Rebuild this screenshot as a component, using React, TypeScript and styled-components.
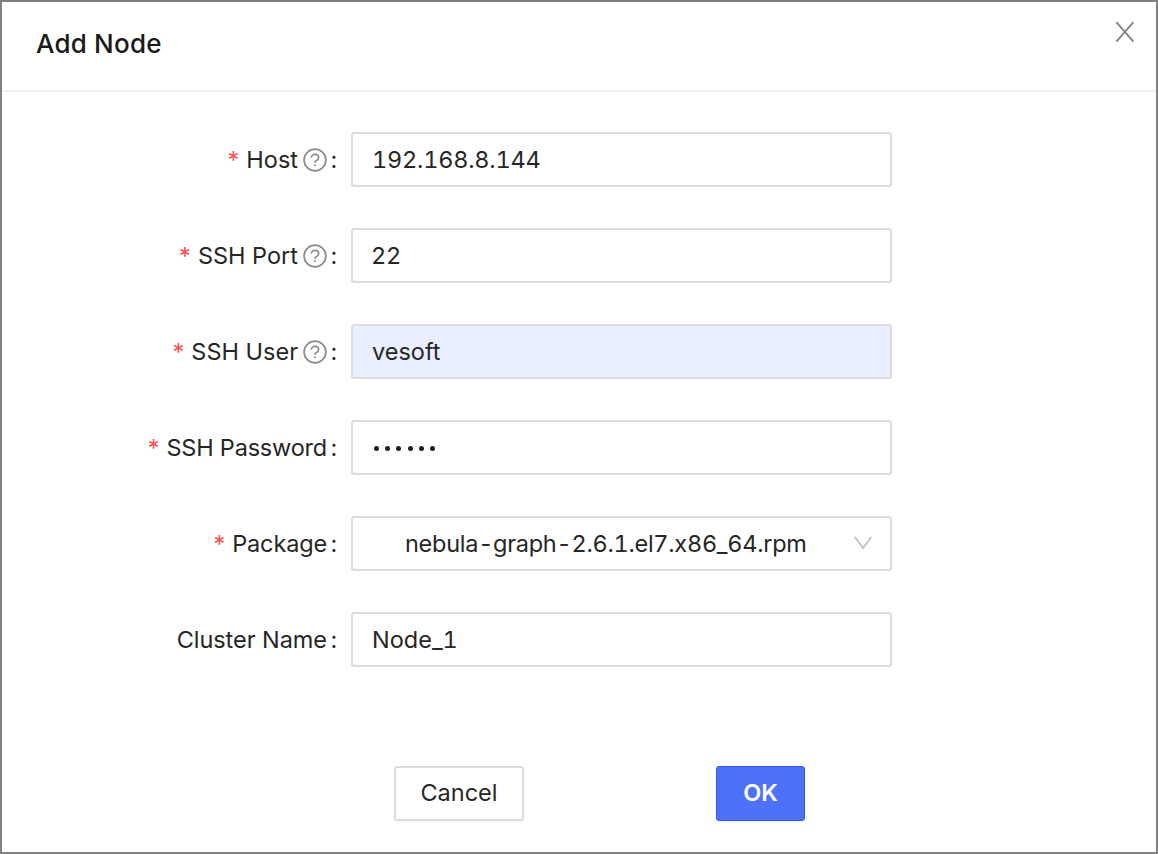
import React from "react";
import styled, { createGlobalStyle } from "styled-components";

const Global = createGlobalStyle`
  * { box-sizing: border-box; }
  body { margin: 0; background: #fff; }
`;

const Modal = styled.div`
  width: 1158px;
  height: 854px;
  border: 2px solid #828080;
  background: #fff;
  font-family: Inter, Roboto, sans-serif;
  font-size: 23.5px;
  font-feature-settings: "calt" 0;
  line-height: 28px;
  color: #262626;
  display: flex;
  flex-direction: column;
`;

const Header = styled.header`
  height: 90px;
  flex: none;
  display: flex;
  justify-content: space-between;
  align-items: flex-start;
  padding: 19px 21px 0 34px;
  border-bottom: 2px solid #f0f0f0;
`;

const Title = styled.h1`
  margin: 8px 0 0;
  font-size: 26px;
  font-weight: 500;
  line-height: 30px;
  letter-spacing: 0.2px;
  color: #1a1a1a;
`;

const CloseIcon = styled.svg`
  width: 20px;
  height: 22px;
  flex: none;
`;

const Form = styled.div`
  padding-top: 40px;
  display: flex;
  flex-direction: column;
  gap: 41px;
`;

const Row = styled.div`
  height: 55px;
  display: flex;
  align-items: center;
`;

const Label = styled.div`
  width: 335px;
  margin-right: 14px;
  flex: none;
  display: flex;
  align-items: center;
  justify-content: flex-end;
  white-space: nowrap;
`;

const Required = styled.span`
  color: #ff4d4f;
  margin-right: 7px;
`;

const Text = styled.span<{ $spacing?: number; $tabular?: boolean }>`
  letter-spacing: ${(p) => p.$spacing ?? 0}px;
  font-feature-settings: "tnum" ${(p) => (p.$tabular ? 1 : 0)}, "calt" 0;
  white-space: nowrap;
`;

const HelpIcon = styled.svg`
  width: 24px;
  height: 24px;
  margin: 0 0 0 5px;
`;

const Colon = styled.span`
  width: 6px;
  margin-left: 4px;
  display: flex;
  justify-content: center;
`;

const Field = styled.div<{ $filled?: boolean; $inset?: number }>`
  width: 541px;
  height: 55px;
  border: 2px solid #dcdcdc;
  border-radius: 3px;
  background: ${(p) => (p.$filled ? "#e9effe" : "#fff")};
  padding: 0 17px 0 ${(p) => p.$inset ?? 19}px;
  display: flex;
  align-items: center;
  justify-content: space-between;
`;

const Dots = styled.span`
  display: flex;
  gap: 6.2px;
  padding: 1px 0 0 2px;
`;

const Dot = styled.i`
  width: 5px;
  height: 5px;
  border-radius: 50%;
  background: #1f1f1f;
`;

const Chevron = styled.svg`
  width: 20px;
  height: 16px;
`;

const Footer = styled.footer`
  display: flex;
  gap: 192px;
  padding: 99px 0 0 392px;
`;

const Button = styled.button<{ $primary?: boolean }>`
  width: ${(p) => (p.$primary ? 89 : 130)}px;
  height: 55px;
  padding: 0 0 1px;
  border: 2px solid ${(p) => (p.$primary ? "#2f5cf5" : "#dcdcdc")};
  border-width: ${(p) => (p.$primary ? 1 : 2)}px;
  border-radius: 3px;
  background: ${(p) => (p.$primary ? "#4d72f8" : "#fff")};
  color: ${(p) => (p.$primary ? "#fff" : "#262626")};
  box-shadow: 0 2px 1px rgba(0, 0, 0, 0.025);
  font: inherit;
  font-weight: ${(p) => (p.$primary ? 600 : 400)};
`;

function Help() {
  return (
    <HelpIcon viewBox="0 0 24 24" fill="none" stroke="#8c8c8c">
      <circle cx="12" cy="12" r="10.9" strokeWidth="1.7" />
      <path d="M8.4 9.7C8.4 7.6 9.9 6.4 12 6.4s3.7 1.2 3.7 3.1c0 1.5-1 2.4-2.2 2.9-1 .4-1.5 1-1.5 2v.6" strokeWidth="1.6" />
      <circle cx="12" cy="17.2" r="1" fill="#8c8c8c" stroke="none" />
    </HelpIcon>
  );
}

interface RowProps {
  label: string;
  spacing?: number;
  required?: boolean;
  help?: boolean;
  children: React.ReactNode;
}

function FormRow({ label, spacing = 0, required, help, children }: RowProps) {
  return (
    <Row>
      <Label>
        {required && <Required>*</Required>}
        <Text $spacing={spacing}>{label}</Text>
        {help && <Help />}
        <Colon>:</Colon>
      </Label>
      {children}
    </Row>
  );
}

export default function App() {
  return (
    <>
      <Global />
      <Modal>
        <Header>
          <Title>Add Node</Title>
          <CloseIcon viewBox="0 0 20 22" fill="none" stroke="#858585" strokeWidth="1.9">
            <path d="M1.4 1.2 18.4 20.6M18.4 1.2 1.4 20.6" />
          </CloseIcon>
        </Header>
        <Form>
          <FormRow label="Host" required help>
            <Field><Text $tabular $spacing={-0.22}>192.168.8.144</Text></Field>
          </FormRow>
          <FormRow label="SSH Port" required help>
            <Field $inset={18}><Text $tabular $spacing={-0.22}>22</Text></Field>
          </FormRow>
          <FormRow label="SSH User" required help>
            <Field $filled><Text>vesoft</Text></Field>
          </FormRow>
          <FormRow label="SSH Password" spacing={-0.2} required>
            <Field><Dots>{[0, 1, 2, 3, 4, 5].map((n) => <Dot key={n} />)}</Dots></Field>
          </FormRow>
          <FormRow label="Package" spacing={-0.15} required>
            <Field $inset={52}>
              <Text $tabular $spacing={-0.27}>nebula-graph-2.6.1.el7.x86_64.rpm</Text>
              <Chevron viewBox="0 0 20 16" fill="none" stroke="#bfbfbf" strokeWidth="1.7">
                <path d="M1.8 1 10 12 18.2 1" />
              </Chevron>
            </Field>
          </FormRow>
          <FormRow label="Cluster Name" spacing={-0.05}>
            <Field><Text $tabular>Node_1</Text></Field>
          </FormRow>
        </Form>
        <Footer>
          <Button><Text>Cancel</Text></Button>
          <Button $primary><Text>OK</Text></Button>
        </Footer>
      </Modal>
    </>
  );
}
